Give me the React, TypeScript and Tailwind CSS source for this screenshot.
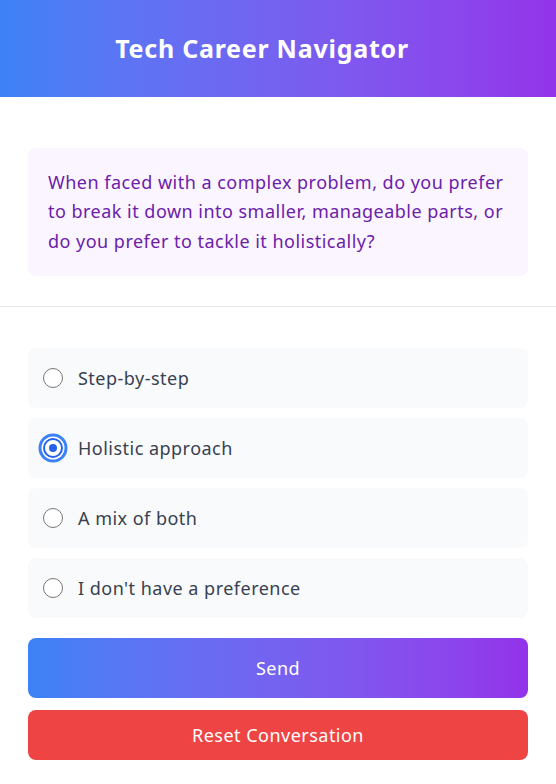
import { useState } from "react";

const options = [
  "Step-by-step",
  "Holistic approach",
  "A mix of both",
  "I don't have a preference",
];

export default function App() {
  const [selected, setSelected] = useState("Holistic approach");

  return (
    <div className="min-h-screen bg-white font-['Noto_Sans',sans-serif] tracking-[0.03em]">
      <header className="h-[97px] flex items-center justify-center pr-8 bg-gradient-to-r from-[#3b82f6] to-[#9333ea]">
        <h1 className="text-[25px] font-bold text-white tracking-[0.75px]">
          Tech Career Navigator
        </h1>
      </header>

      <div className="px-7 pt-[51px] pb-[30px] border-b border-[#e5e7eb]">
        <div className="rounded-lg bg-[#faf5ff] p-5 text-lg leading-relaxed text-[#6b21a8]">
          When faced with a complex problem, do you prefer to break it down
          into smaller, manageable parts, or do you prefer to tackle it
          holistically?
        </div>
      </div>

      <div className="px-7 pt-[41px] pb-6 flex flex-col">
        <div className="flex flex-col gap-2.5">
          {options.map((opt) => {
            const checked = opt === selected;
            return (
              <label
                key={opt}
                onClick={() => setSelected(opt)}
                className="h-[60px] flex items-center gap-[15px] pl-[15px] rounded-lg bg-[#f9fafb] cursor-pointer"
              >
                {checked ? (
                  <span className="w-5 h-5 rounded-full border-2 border-[#2563eb] bg-white flex items-center justify-center shadow-[0_0_0_1.5px_#fff,0_0_0_4.5px_#3b82f6]">
                    <span className="w-2 h-2 rounded-full bg-[#2563eb]" />
                  </span>
                ) : (
                  <span className="w-5 h-5 rounded-full border border-[#767676] bg-white" />
                )}
                <span className="text-lg text-[#374151]">{opt}</span>
              </label>
            );
          })}
        </div>

        <button className="mt-5 h-[60px] w-full rounded-lg bg-gradient-to-r from-[#3b82f6] to-[#9333ea] text-lg text-white">
          Send
        </button>
        <button className="mt-3 h-[50px] w-full rounded-lg bg-[#ef4444] text-lg text-white">
          Reset Conversation
        </button>
      </div>
    </div>
  );
}
